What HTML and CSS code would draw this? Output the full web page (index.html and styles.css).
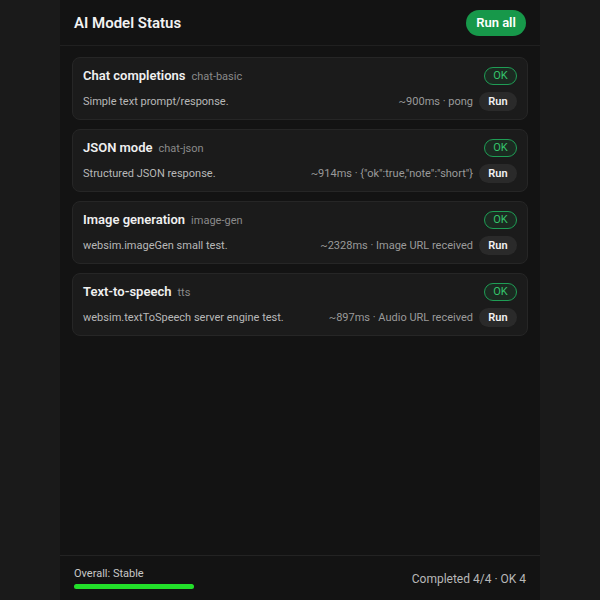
FILE: index.html
```html
<!DOCTYPE html>
<html>
<head>
<meta charset="utf-8">
<link rel="stylesheet" href="styles.css">
</head>
<body>
<div class="app">
  <header class="header">
    <h1 class="title">AI Model Status</h1>
    <button class="run-all">Run all</button>
  </header>
  <main class="list">
    <div class="card">
      <div class="row">
        <div class="name"><span class="label">Chat completions</span><span class="id">chat-basic</span></div>
        <span class="badge">OK</span>
      </div>
      <div class="row">
        <span class="desc">Simple text prompt/response.</span>
        <div class="right"><span class="meta">~900ms · pong</span><button class="run">Run</button></div>
      </div>
    </div>
    <div class="card">
      <div class="row">
        <div class="name"><span class="label">JSON mode</span><span class="id">chat-json</span></div>
        <span class="badge">OK</span>
      </div>
      <div class="row">
        <span class="desc">Structured JSON response.</span>
        <div class="right"><span class="meta">~914ms · {"ok":true,"note":"short"}</span><button class="run">Run</button></div>
      </div>
    </div>
    <div class="card">
      <div class="row">
        <div class="name"><span class="label">Image generation</span><span class="id">image-gen</span></div>
        <span class="badge">OK</span>
      </div>
      <div class="row">
        <span class="desc">websim.imageGen small test.</span>
        <div class="right"><span class="meta">~2328ms · Image URL received</span><button class="run">Run</button></div>
      </div>
    </div>
    <div class="card">
      <div class="row">
        <div class="name"><span class="label">Text-to-speech</span><span class="id">tts</span></div>
        <span class="badge">OK</span>
      </div>
      <div class="row">
        <span class="desc">websim.textToSpeech server engine test.</span>
        <div class="right"><span class="meta">~897ms · Audio URL received</span><button class="run">Run</button></div>
      </div>
    </div>
  </main>
  <footer class="footer">
    <div class="overall">
      <span class="overall-label">Overall: Stable</span>
      <div class="bar"><div class="bar-fill" style="width:100%"></div></div>
    </div>
    <span class="completed">Completed 4/4 · OK 4</span>
  </footer>
</div>
</body>
</html>
```

FILE: styles.css
```css
* { box-sizing: border-box; }
html, body { margin: 0; padding: 0; }
body {
  background: #1a1a1a;
  font-family: Roboto, "Liberation Sans", sans-serif;
  color: #eaeaea;
}
.app {
  width: 480px;
  height: 600px;
  margin: 0 auto;
  background: #131313;
  display: flex;
  flex-direction: column;
}
.header {
  height: 46px;
  padding: 0 14px;
  display: flex;
  align-items: center;
  justify-content: space-between;
  border-bottom: 1px solid #202020;
}
.title {
  margin: 0;
  font-size: 15px;
  font-weight: 600;
  color: #f2f2f2;
}
.run-all {
  font-family: inherit;
  height: 26px;
  width: 60px;
  border: 0;
  border-radius: 13px;
  background: #17984a;
  color: #fff;
  font-size: 13px;
  font-weight: 600;
  padding: 0;
  margin-top: 0;
}
.list {
  flex: 1;
  padding: 11px 12px;
  display: flex;
  flex-direction: column;
  gap: 9px;
}
.card {
  height: 63px;
  background: #1b1b1b;
  border: 1px solid #262626;
  border-radius: 8px;
  padding: 8px 10px 8px 10px;
  display: flex;
  flex-direction: column;
  gap: 7px;
}
.row {
  display: flex;
  align-items: center;
  justify-content: space-between;
  height: 19px;
}
.name { display: flex; align-items: baseline; gap: 6px; }
.label { font-size: 13px; font-weight: 600; color: #f0f0f0; }
.id { font-size: 11px; color: #8a8a8a; }
.badge {
  height: 18px;
  width: 33px;
  border: 1px solid #1f9d55;
  border-radius: 9px;
  background: rgba(34, 160, 85, 0.12);
  color: #35c46c;
  font-size: 11px;
  display: flex;
  align-items: center;
  justify-content: center;
}
.desc { font-size: 11px; color: #b8b8b8; }
.right { display: flex; align-items: center; gap: 6px; }
.meta { font-size: 11px; color: #9a9a9a; }
.run {
  font-family: inherit;
  height: 19px;
  width: 38px;
  border: 0;
  border-radius: 10px;
  background: #2a2a2a;
  color: #f2f2f2;
  font-size: 11px;
  font-weight: 600;
  padding: 0;
}
.footer {
  height: 45px;
  border-top: 1px solid #232323;
  padding: 10px 14px 11px;
  display: flex;
  align-items: center;
  justify-content: space-between;
}
.overall { display: flex; flex-direction: column; gap: 4px; }
.overall-label { font-size: 11px; color: #c8c8c8; line-height: 13px; }
.bar { width: 120px; height: 5px; border-radius: 3px; background: #2a2a2a; }
.bar-fill { height: 100%; border-radius: 3px; background: #22e02a; }
.completed { font-size: 12px; color: #b8b8b8; margin-top: 2px; }
```
